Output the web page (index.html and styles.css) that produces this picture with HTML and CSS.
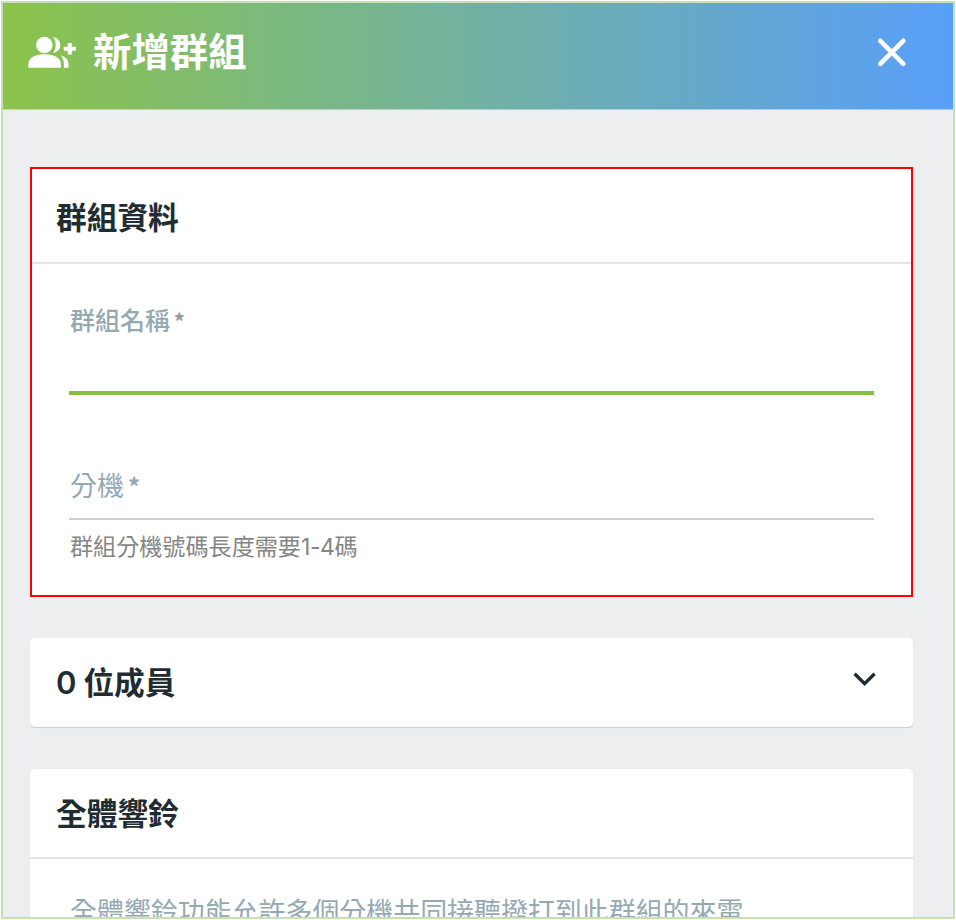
FILE: index.html
```html
<!DOCTYPE html>
<html lang="zh-Hant">

	<head>
		<meta charset="utf-8" />
		<meta name="viewport" content="width=device-width">
		<title>新增群組</title>
		<link rel="stylesheet" href="styles.css">
	</head>

	<body>
		<div class="dialog">
			<div class="dialog-head">
				<svg class="icon-group" viewBox="0 0 48 34" width="48" height="34">
					<circle cx="16.3" cy="10" r="8.3" />
					<path d="M0.3 32.8v-3.3c0-7 7-10.2 16.3-10.2s16.3 3.2 16.3 10.2v3.3z" />
					<path d="M25 2c4.5.6 7.3 3.9 7.3 8s-2.8 7.4-7.3 8c3.6-4.8 3.6-11.2 0-16z" />
					<path d="M32.8 20.3c5.2 1.5 7.7 5 7.7 9.2v3.3h-4.6v-3.3c0-3.5-.9-6.7-3.1-9.2z" />
					<path class="plus" d="M41.8 8v11.4M35.8 13.7h12" />
				</svg>
				<h1 class="dialog-tit">新增群組</h1>
				<svg class="icon-close" viewBox="0 0 30 30" width="30" height="30">
					<path d="M3.3 3.8l23 23M26.3 3.8l-23 23" />
				</svg>
			</div>
			<div class="dialog-cont">
				<div class="card card-active">
					<h2 class="card-tit">群組資料</h2>
					<div class="card-body">
						<div class="field field-focus">
							<label class="field-label">群組名稱 <span class="star">*</span></label>
						</div>
						<div class="field field-empty">
							<label class="field-label">分機 <span class="star">*</span></label>
						</div>
						<p class="field-hint">群組分機號碼長度需要<span class="num">1-4</span>碼</p>
					</div>
				</div>
				<div class="card card-fold">
					<h2 class="card-tit"><span class="num">0</span> 位成員</h2>
					<svg class="icon-arrow" viewBox="0 0 24 16" width="24" height="16">
						<path d="M1.6 2.8l10 9.8L21.6 2.8" />
					</svg>
				</div>
				<div class="card card-ring">
					<h2 class="card-tit">全體響鈴</h2>
					<p class="card-text">全體響鈴功能允許多個分機共同接聽撥打到此群組的來電</p>
				</div>
			</div>
		</div>
	</body>

</html>
```
FILE: styles.css
```css
/*初始化样式*/

* {
	padding: 0;
	margin: 0;
	box-sizing: border-box;
}

body {
	padding: 1px;
	background: #fff;
	font-family: "Noto Sans CJK TC", "Noto Sans", sans-serif;
	overflow: hidden;
}

/*弹框样式*/

.dialog {
	height: 918px;
	border: 2px solid #c5e1b5;
	background: #edeef0;
	overflow: hidden;
}

.dialog-head {
	display: flex;
	align-items: center;
	height: 107px;
	padding: 0 46px 8px 25px;
	background: linear-gradient(90deg, #8bc34a, #589ff9);
	border-bottom: 1px solid rgba(255, 255, 255, .45);
}

.dialog-tit {
	flex: 1;
	margin-left: 17px;
	padding-bottom: 6px;
	font-size: 38.4px;
	line-height: 50px;
	font-weight: bold;
	color: #fff;
}

.icon-group {
	fill: #fff;
}

.icon-group .plus {
	fill: none;
	stroke: #fff;
	stroke-width: 4;
}

.icon-close {
	fill: none;
	stroke: #fff;
	stroke-width: 4.6;
	stroke-linecap: round;
}

.dialog-cont {
	display: flex;
	flex-direction: column;
	padding: 57px 40px 0 27px;
}

.num {
	font-family: Inter, sans-serif;
}

/*卡片*/

.card {
	flex: none;
	background: #fff;
	border-radius: 5px;
	box-shadow: 0 1px 1px rgba(0, 0, 0, .14);
}

.card-tit {
	height: 90px;
	padding-left: 26px;
	border-bottom: 2px solid #e4e5e6;
	font-size: 30.7px;
	line-height: 85px;
	font-weight: bold;
	color: #1f2d33;
}

.card-active {
	height: 430px;
	border: 2px solid #f00;
	border-radius: 0;
	box-shadow: none;
}

.card-active .card-tit {
	height: 95px;
	padding-left: 24px;
	line-height: 94px;
}

.card-body {
	padding: 38px 37px 0;
}

.field {
	color: #95a9b3;
}

.field-label {
	display: block;
	padding-left: 1px;
}

.field .star {
	margin-left: -2px;
	font-weight: bold;
}

.field-focus {
	height: 93px;
	border-bottom: 4px solid #84bf41;
	font-size: 25px;
	line-height: 34px;
	font-weight: 500;
}

.field-focus .star {
	font-size: 22px;
	color: #999;
}

.field-empty {
	height: 125px;
	padding-top: 69px;
	border-bottom: 2px solid #c5d0d5;
	font-size: 27px;
	line-height: 41px;
}

.field-empty .star {
	font-size: 24px;
}

.field-hint {
	padding: 8px 0 0 1px;
	font-size: 23.1px;
	line-height: 34px;
	color: #858585;
}

.field-hint .num {
	font-size: 23px;
	letter-spacing: -.4px;
}

.card-fold {
	display: flex;
	align-items: center;
	justify-content: space-between;
	height: 89px;
	margin-top: 41px;
	padding-right: 36px;
}

.card-fold .card-tit {
	border-bottom: 0;
}

.card-fold .num {
	font-size: 31px;
	font-weight: 600;
}

.icon-arrow {
	margin-top: -8px;
	fill: none;
	stroke: #1f2d33;
	stroke-width: 3.4;
}

.card-ring {
	height: 200px;
	margin-top: 42px;
}

.card-text {
	padding: 32px 0 0 40px;
	font-size: 26.95px;
	line-height: 40px;
	color: #95a9b3;
	white-space: nowrap;
}
```
